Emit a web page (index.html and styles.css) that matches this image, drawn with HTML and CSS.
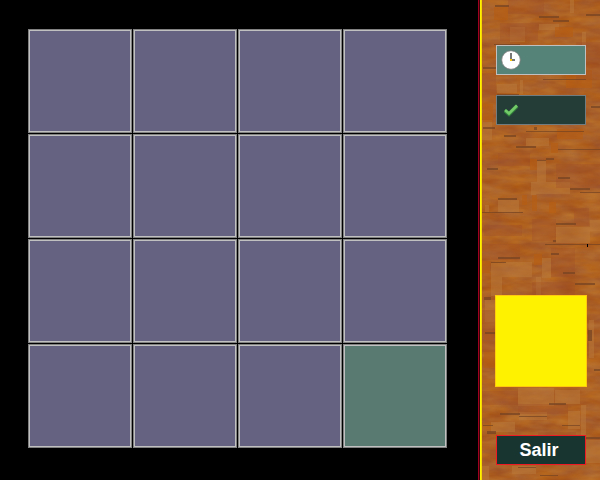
FILE: index.html
```html
<!DOCTYPE html>
<html lang="es">
<head>
<meta charset="utf-8">
<title>Memoria</title>
<link rel="stylesheet" href="styles.css">
</head>
<body>
<main class="board">
  <div class="grid">
    <button class="cell" type="button" aria-label="1"></button>
    <button class="cell" type="button" aria-label="2"></button>
    <button class="cell" type="button" aria-label="3"></button>
    <button class="cell" type="button" aria-label="4"></button>
    <button class="cell" type="button" aria-label="5"></button>
    <button class="cell" type="button" aria-label="6"></button>
    <button class="cell" type="button" aria-label="7"></button>
    <button class="cell" type="button" aria-label="8"></button>
    <button class="cell" type="button" aria-label="9"></button>
    <button class="cell" type="button" aria-label="10"></button>
    <button class="cell" type="button" aria-label="11"></button>
    <button class="cell" type="button" aria-label="12"></button>
    <button class="cell" type="button" aria-label="13"></button>
    <button class="cell" type="button" aria-label="14"></button>
    <button class="cell" type="button" aria-label="15"></button>
    <button class="cell cell-active" type="button" aria-label="16"></button>
  </div>
</main>
<aside class="panel">
  <svg class="wood" viewBox="0 0 118 480" preserveAspectRatio="xMidYMid slice" aria-hidden="true" shape-rendering="crispEdges">
    <defs>
      <filter id="grain" x="0" y="0" width="100%" height="100%" color-interpolation-filters="sRGB">
        <feTurbulence type="fractalNoise" baseFrequency="0.04 0.12" numOctaves="3" seed="8"/>
        <feColorMatrix values="0.15 0 0 0 0.6  0.15 0.08 0 0 0.265  0 0.16 0 0 0.065  0 0 0 0 1"/>
      </filter>
    </defs>
    <rect width="118" height="480" filter="url(#grain)"/>
    <g fill="#b9793b" opacity=".5">
      <path d="M88 0h4v13h-4zM57 24h20v6H57zM28 27h15v15H28zM100 32h4v15h-4zM15 84h20v9H15zM38 80h3v14h-3zM0 120h10v20H0zM44 138h23v8H44zM55 160h9v22h-9zM49 182h5v13h-5zM54 182h34v12H54zM16 200h21v12H16zM3 205h4v7H3zM74 227h34v16H74zM108 220h10v11h-10zM60 258h9v20h-9zM9 263h11v33H9zM20 262h30v15H20zM54 277h5v20h-5zM3 300h14v22H3zM107 320h5v38h-5zM36 388h36v18H36zM73 390h25v14H73zM86 411h12v18H86zM99 405h5v34h-5zM9 422h24v10H9zM37 412h28v8H37zM104 440h14v23h-14zM30 466h24v8H30zM0 466h7v14H0z"/>
    </g>
    <g fill="#b85d12" opacity=".6">
      <path d="M48 159h7v11h-7zM69 143h7v10h-7zM40 195h5v10h-5zM50 195h5v16h-5zM67 202h7v11h-7zM52 254h8v11h-8zM0 261h8v12H0zM12 7h14v13H12zM73 27h18v10H73zM84 70h26v18H84zM1 104h10v18H1zM75 129h26v10H75zM2 331h10v9H2zM2 350h11v18H2z"/>
    </g>
    <g fill="#a14f28" opacity=".35">
      <path d="M26 0h36v14H26zM18 23h38v18H18zM94 42h24v38H94zM0 73h14v22H0zM16 153h32v13H16zM74 164h44v24H74zM50 219h24v22H50zM2 225h38v11H2zM92 208h15v18H92zM0 244h38v16H0zM69 248h24v29H69zM50 282h43v15H50zM0 310h14v42H0zM0 391h36v14H0zM36 404h50v10H36zM56 432h38v8H56zM8 450h45v9H8z"/>
    </g>
    <g fill="#744322" opacity=".7">
      <path d="M13 5h14v2H13zM57 16h20v2H57zM71 20h16v2H71zM104 14h14v2h-14zM12 44h26v1H12zM1 67h13v2H1zM61 79h43v1H61zM15 94h22v1H15zM109 106h9v2h-9zM1 127h12v2H1zM22 135h12v2H22zM44 131h58v1H44zM52 127h3v3h-3zM34 146h20v2H34zM76 149h42v1H76zM5 168h11v2H5zM64 158h8v2h-8zM55 160h9v1h-9zM76 177h12v2H76zM88 188h20v2H88zM98 192h20v1H98zM16 198h19v2H16zM0 212h41v1H0zM74 223h20v2H74zM71 240h3v2h-3zM63 244h55v1H63zM16 257h22v2H16zM9 262h15v1H9zM69 253h8v2h-8zM81 272h12v2H81zM93 283h20v2H93zM2 297h7v3H2zM3 332h10v2H3zM106 330h4v11h-4zM112 369h6v2h-6zM18 413h20v2H18zM67 403h17v2H67zM37 416h28v1H37zM80 425h18v1H80zM1 425h10v1H1zM5 431h9v3H5zM104 437h14v2h-14zM36 467h18v1H36zM58 475h18v1H58z"/>
    </g>
    <path fill="#000" d="M105 244h1v3h-1z"/>
  </svg>
  <div class="readout readout-time" role="status" aria-label="Tiempo">
    <svg class="icon icon-clock" viewBox="0 0 20 20" aria-hidden="true">
      <circle cx="10" cy="10" r="9.3" fill="#fff" stroke="#777" stroke-width=".8"/>
      <path d="M9 3h2v6H9zM11 9h3v2h-3z" fill="#777"/>
      <path d="M9 9h2v2H9z" fill="#ffc60a"/>
    </svg>
  </div>
  <div class="readout readout-hits" role="status" aria-label="Aciertos">
    <svg class="icon icon-check" viewBox="0 0 16 14" aria-hidden="true">
      <path d="M2 7.5L6 11L14 3" fill="none" stroke="#34843c" stroke-width="4"/>
      <path d="M2 7L6 10.5L14 2.5" fill="none" stroke="#73ca69" stroke-width="2.6"/>
    </svg>
  </div>
  <div class="preview"></div>
  <button class="exit" type="button">Salir</button>
</aside>
</body>
</html>
```
FILE: styles.css
```css
* {
  box-sizing: border-box;
}

body {
  margin: 0;
  min-height: 100vh;
  display: grid;
  grid-template-columns: 1fr 122px;
  background: #000;
  font-family: "Liberation Sans", Arial, sans-serif;
}

.board {
  padding: 29px 31px 32px 28px;
}

.grid {
  display: grid;
  grid-template-columns: repeat(4, 1fr);
  gap: 1px;
}

.cell {
  aspect-ratio: 1;
  padding: 0;
  border: 1px solid #808080;
  border-radius: 0;
  background: #656180;
  box-shadow: inset 0 0 0 1px #c0c0c0;
}

.cell-active {
  background: #587a70;
}

.panel {
  position: relative;
  display: flex;
  flex-direction: column;
  align-items: center;
  gap: 20px;
  padding: 45px 14px 15px 18px;
  background: linear-gradient(90deg, #a00020 1px, #3c0508 1px 2px, #fff200 2px 3px, #f5d800 3px);
}

.wood {
  position: absolute;
  inset: 0 0 0 4px;
  width: calc(100% - 4px);
  height: 100%;
}

.readout,
.preview,
.exit {
  position: relative;
  width: 90px;
  height: 30px;
}

.readout {
  display: flex;
  align-items: center;
  padding-left: 4px;
  border: 1px solid #c0c0c0;
}

.readout-time {
  background: #568378;
}

.readout-hits {
  border-color: #707c80;
  background: #253d37;
}

.icon-clock {
  width: 20px;
  height: 20px;
}

.icon-check {
  width: 16px;
  height: 14px;
  margin-left: 2px;
}

.preview {
  width: 92px;
  height: 92px;
  margin-top: auto;
  border: 1px solid #ffc90e;
  background: #fff200;
}

.exit {
  margin-top: 28px;
  padding: 0 4px 0 0;
  border: 1px solid #ed1c24;
  border-radius: 0;
  background: #18362f;
  color: #fff;
  font: bold 18px/20px "Liberation Sans", Arial, sans-serif;
}
```
